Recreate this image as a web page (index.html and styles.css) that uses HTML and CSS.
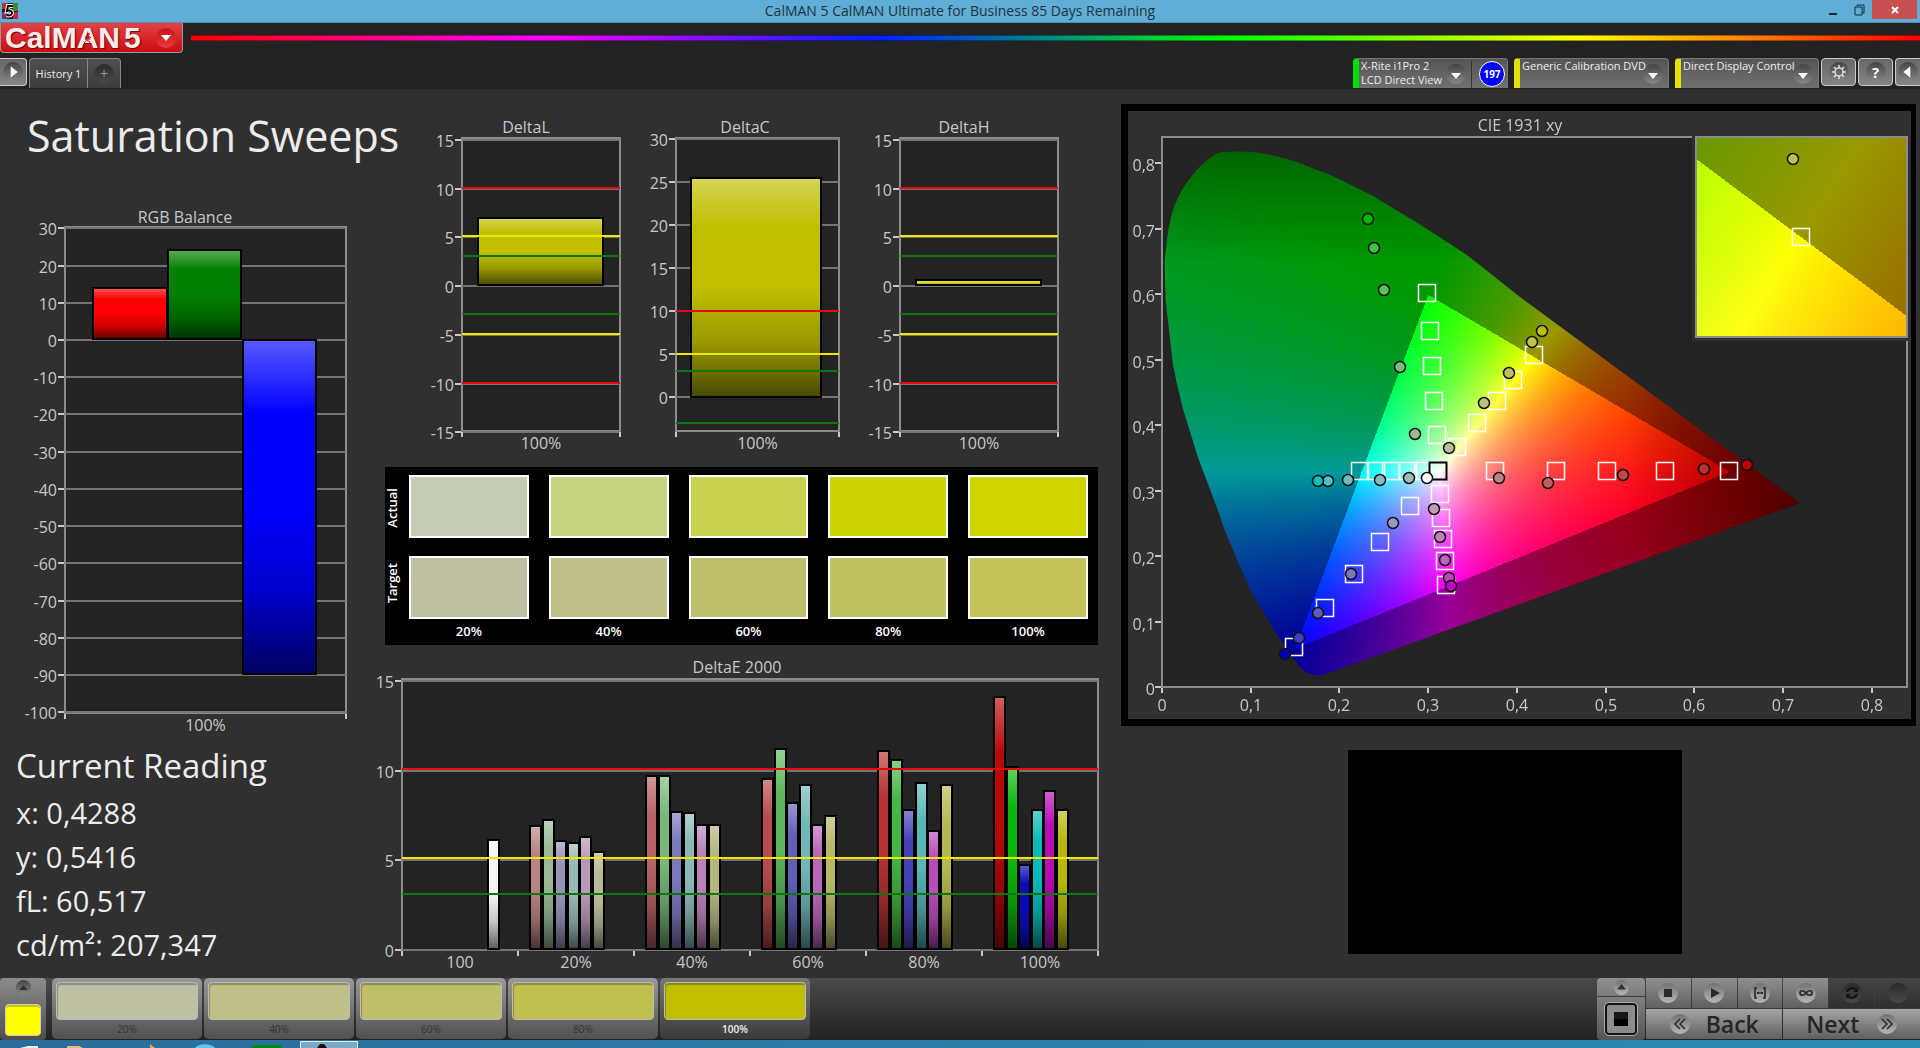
FILE: index.html
```html
<!DOCTYPE html>
<html lang="en">
<head>
<meta charset="utf-8">
<title>CalMAN 5 CalMAN Ultimate for Business 85 Days Remaining</title>
<link rel="stylesheet" href="styles.css">
</head>
<body>
<header class="titlebar">
  <svg class="app-icon" viewBox="0 0 16 16" aria-hidden="true"><rect width="16" height="16" fill="#2a1a14"/><rect width="6" height="6" fill="#b03428"/><rect y="9" width="5" height="7" fill="#8a2a6a"/><rect x="11" width="5" height="8" fill="#3c8a34"/><rect x="11" y="9" width="5" height="7" fill="#c02848"/><path d="M11 3H6L5 8c3-1 5 0 5 2s-2 3-5 2" fill="none" stroke="#fff" stroke-width="4"/><path d="M11 3H6L5 8c3-1 5 0 5 2s-2 3-5 2" fill="none" stroke="#000" stroke-width="2"/></svg>
  <h1 class="window-title">CalMAN 5 CalMAN Ultimate for Business 85 Days Remaining</h1>
  <div class="window-buttons">
    <button class="win" aria-label="Minimize"><svg viewBox="0 0 12 12"><path d="M2 9h8v2H2z" fill="#1c2a33"/></svg></button>
    <button class="win" aria-label="Restore"><svg viewBox="0 0 12 12"><path d="M4 2V1h7v8h-2M2 3h7v8H2z" fill="none" stroke="#1c2a33"/></svg></button>
    <button class="win win-close" aria-label="Close"><svg viewBox="0 0 12 12"><path d="M3 3l6 6M9 3l-6 6" stroke="#fff" stroke-width="2"/></svg></button>
  </div>
</header>

<div class="brandbar">
  <button class="brand"><span>CalM</span><span class="brand-a">A<svg viewBox="0 0 12 14"><circle cx="7" cy="2" r="1" fill="#c8191c"/><path d="M3 5l4-1 2 2M7 4L5 8l3 2-1 3M5 8l-3 3" fill="none" stroke="#c8191c"/></svg></span><span>N</span><span class="brand-five">5</span><i class="orb orb-red"><svg viewBox="0 0 10 6"><path d="M0 0h10L5 6z" fill="#fff"/></svg></i></button>
  <div class="spectrum"></div>
</div>

<nav class="toolbar">
  <button class="square side-open" aria-label="Open panel"><i class="orb"><svg viewBox="0 0 12 12"><path d="M4 1l6 5-6 5z" fill="#fff"/></svg></i></button>
  <div class="tabs"><button class="tab">History 1</button><button class="tab tab-add" aria-label="Add tab"><i class="orb orb-dark">+</i></button></div>
  <div class="devices">
    <button class="device device-green"><span class="device-name">X-Rite i1Pro 2<br>LCD Direct View</span><i class="orb"><svg viewBox="0 0 10 6"><path d="M0 0h10L5 6z" fill="#fff"/></svg></i><span class="badge-cell"><b class="badge">197</b></span></button>
    <button class="device"><span class="device-name">Generic Calibration DVD</span><i class="orb"><svg viewBox="0 0 10 6"><path d="M0 0h10L5 6z" fill="#fff"/></svg></i></button>
    <button class="device device-last"><span class="device-name">Direct Display Control</span><i class="orb"><svg viewBox="0 0 10 6"><path d="M0 0h10L5 6z" fill="#fff"/></svg></i></button>
  </div>
  <button class="square" aria-label="Settings"><i class="orb"><svg viewBox="0 0 14 14"><circle cx="7" cy="7" r="4" fill="none" stroke="#ddd" stroke-width="1.5"/><path d="M7 0v3M7 11v3M0 7h3M11 7h3M2 2l2 2M10 10l2 2M12 2l-2 2M4 10l-2 2" stroke="#ddd" stroke-width="1.6"/></svg></i></button>
  <button class="square" aria-label="Help"><i class="orb orb-help">?</i></button>
  <button class="square side-close" aria-label="Collapse panel"><i class="orb"><svg viewBox="0 0 12 12"><path d="M8 1L2 6l6 5z" fill="#fff"/></svg></i></button>
</nav>

<main class="workspace">
  <section class="col-left">
    <h2 class="page-title">Saturation Sweeps</h2>
    <svg class="chart" id="rgb" viewBox="0 205 385 535" role="img" aria-label="RGB Balance"></svg>
    <h3 class="reading-title">Current Reading</h3>
    <ul class="readings"><li>x: 0,4288</li><li>y: 0,5416</li><li>fL: 60,517</li><li>cd/m²: 207,347</li></ul>
  </section>

  <section class="col-mid">
    <div class="deltas">
      <svg class="chart" id="deltaL" viewBox="385 112 245 343" role="img" aria-label="DeltaL"></svg>
      <svg class="chart" id="deltaC" viewBox="630 112 225 343" role="img" aria-label="DeltaC"></svg>
      <svg class="chart" id="deltaH" viewBox="855 112 265 343" role="img" aria-label="DeltaH"></svg>
    </div>
    <table class="swatches">
      <tr><th scope="row"><span>Actual</span></th><td><i class="sw a20"></i></td><td><i class="sw a40"></i></td><td><i class="sw a60"></i></td><td><i class="sw a80"></i></td><td><i class="sw a100"></i></td></tr>
      <tr class="targets"><th scope="row"><span>Target</span></th><td><i class="sw t20"></i></td><td><i class="sw t40"></i></td><td><i class="sw t60"></i></td><td><i class="sw t80"></i></td><td><i class="sw t100"></i></td></tr>
      <tr class="levels"><td></td><td>20%</td><td>40%</td><td>60%</td><td>80%</td><td>100%</td></tr>
    </table>
    <svg class="chart chart-wide" id="deltaE" viewBox="385 655 735 323" role="img" aria-label="DeltaE 2000"></svg>
  </section>

  <section class="col-right">
    <div class="cie">
      <canvas id="gamut" width="795" height="622"></canvas>
      <svg class="chart" id="cie" viewBox="1121 104 795 622" role="img" aria-label="CIE 1931 xy"></svg>
    </div>
    <div class="preview"></div>
  </section>
</main>

<footer class="dock">
  <button class="current" aria-label="Current colour"><i class="orb orb-small"><svg viewBox="0 0 10 6"><path d="M0 6h10L5 0z" fill="#333"/></svg></i><i class="current-color"></i></button>
  <div class="levels-list">
    <button class="level"><i class="t20"></i>20%</button>
    <button class="level"><i class="t40"></i>40%</button>
    <button class="level"><i class="t60"></i>60%</button>
    <button class="level"><i class="l80"></i>80%</button>
    <button class="level level-on"><i class="l100"></i>100%</button>
  </div>
  <div class="pattern">
    <button class="pattern-up" aria-label="Show patterns"><i class="orb orb-light orb-small"><svg viewBox="0 0 10 6"><path d="M0 6h10L5 0z" fill="#333"/></svg></i></button>
    <button class="pattern-window" aria-label="Pattern window"><i></i></button>
  </div>
  <div class="transport">
    <button aria-label="Stop"><i class="orb orb-light"><svg viewBox="0 0 14 14"><path d="M3 3h8v8H3z" fill="#2a2a2a"/></svg></i></button>
    <button aria-label="Play"><i class="orb orb-light"><svg viewBox="0 0 14 14"><path d="M4 2l9 5-9 5z" fill="#2a2a2a"/></svg></i></button>
    <button aria-label="Read range"><i class="orb orb-light"><svg viewBox="0 0 14 14"><path d="M4 2H2v10h2M10 2h2v10h-2" fill="none" stroke="#2a2a2a" stroke-width="1.6"/><path d="M4 6h2v2H4zM6.500 6h1v2h-1zM8 6h2v2H8z" fill="#2a2a2a"/></svg></i></button>
    <button aria-label="Continuous"><i class="orb orb-light"><svg viewBox="0 0 14 14"><path d="M7 7C5 4 1 4 1 7s4 3 6 0 6-3 6 0-4 3-6 0z" fill="none" stroke="#2a2a2a" stroke-width="1.7"/></svg></i></button>
    <button class="off" aria-label="Refresh"><i class="orb orb-dark"><svg viewBox="0 0 14 14"><path d="M2 6c1-4 7-5 9-2M12 8c-1 4-7 5-9 2" fill="none" stroke="#151515" stroke-width="2.200"/><path d="M13 1v5H8zM1 13V8h5z" fill="#151515"/></svg></i></button>
    <button class="off" aria-label="Record"><i class="orb orb-dark"></i></button>
    <button class="step"><i class="orb orb-light"><svg viewBox="0 0 14 14"><path d="M7 2L2 7l5 5M12 2L7 7l5 5" fill="none" stroke="#2a2a2a" stroke-width="1.500"/></svg></i><span>Back</span></button>
    <button class="step step-next"><span>Next</span><i class="orb orb-light"><svg viewBox="0 0 14 14"><path d="M2 2l5 5-5 5M7 2l5 5-5 5" fill="none" stroke="#2a2a2a" stroke-width="1.500"/></svg></i></button>
  </div>
</footer>

<div class="taskbar">
  <svg viewBox="0 0 400 8" aria-hidden="true"><path d="M20 8l8-2h10v2z" fill="#e8f0f4"/><path d="M67 8V6h12l4 2z" fill="#e8c070"/><path d="M150 8V4l5 4z" fill="#f0a050"/><path d="M195 8c4-5 16-5 20 0z" fill="#60c8f0"/><path d="M252 5h30v3h-30z" fill="#008c10"/><path d="M300.500 8V1.500h57V8" fill="#7aa8c8" stroke="#e4eef4"/><path d="M317 8l3-4h4l3 4z" fill="#2a0a10"/></svg>
</div>
<script src="charts.js"></script>
</body>
</html>
```

FILE: styles.css
```css
* { box-sizing: border-box; }

body {
  margin: 0;
  min-height: 100vh;
  display: flex;
  flex-direction: column;
  background: #222;
  color: #ececec;
  font-family: "Open Sans", "Noto Sans", sans-serif;
  overflow-x: hidden;
}

button {
  margin: 0;
  padding: 0;
  border: 0;
  color: inherit;
  font: inherit;
}

svg { display: block; }

/* Window frame */
.titlebar {
  display: grid;
  grid-template-columns: 1fr auto 1fr;
  align-items: center;
  height: 23px;
  background: #60add5;
  border-bottom: 1px solid #4b8fb3;
}

.app-icon { width: 16px; height: 16px; margin-left: 2px; }

.window-title {
  margin: 0;
  font-size: 14px;
  line-height: 22px;
  font-weight: 400;
  color: #1d3440;
}

.window-buttons {
  display: flex;
  justify-content: flex-end;
  align-self: start;
  padding-right: 3px;
}

.win {
  display: grid;
  place-items: center;
  width: 26px;
  height: 19px;
  background: none;
}

.win svg { width: 12px; height: 12px; }
.win-close { width: 45px; background: #c75050; }

.brandbar {
  display: flex;
  align-items: flex-start;
  gap: 8px;
  height: 35px;
}

.brand {
  display: flex;
  align-items: center;
  width: 183px;
  height: 30px;
  padding-left: 4px;
  border: 1px solid #999;
  border-top: 0;
  border-radius: 0 0 4px 4px;
  background: linear-gradient(#e04347, #cc0c10);
  color: #eee;
  font: 700 30px/28px "Liberation Sans", sans-serif;
  text-shadow: 1px 1px 1px #700;
}

.brand-a { position: relative; }
.brand-a svg { position: absolute; left: 5px; top: 8px; width: 12px; height: 14px; }
.brand-five { margin-left: 4px; }
.brand .orb { margin-left: auto; margin-right: 6px; }

.spectrum {
  flex: 1;
  height: 6px;
  margin-top: 12px;
  border-top: 1px solid #0006;
  border-bottom: 1px solid #0006;
  background: linear-gradient(90deg, red, magenta 20%, #0020ff 40%, lime 60%, yellow 80%, red);
}

.orb {
  display: grid;
  place-items: center;
  flex: none;
  width: 20px;
  height: 20px;
  border-radius: 50%;
  background: linear-gradient(#444, #888);
  font-style: normal;
}

.orb svg { width: 10px; }
.orb-red { background: linear-gradient(#c81018, #e83c40); }
.orb-dark { background: linear-gradient(#2a2a2a, #4a4a4a); color: #999; }
.orb-light { background: linear-gradient(#707070, #b8b8b8); }
.orb-light svg, .orb-dark svg { width: 14px; }
.orb-small { width: 15px; height: 15px; }
.orb-small svg { width: 9px; }
.orb-help { color: #fff; font-size: 15px; font-weight: 700; }

/* Tabs and devices */
.toolbar {
  display: flex;
  gap: 2px;
  height: 31px;
}

.square {
  display: grid;
  place-items: center;
  width: 35px;
  height: 28px;
  border: 1px solid #ccc;
  border-radius: 4px;
  background: linear-gradient(#666, #858585);
}

.square .orb svg { width: 14px; }
.side-open { width: 27px; border-left: 0; border-radius: 0 4px 4px 0; }
.side-close { width: 25px; border-right: 0; border-radius: 4px 0 0 4px; }

.tabs {
  display: flex;
  width: 92px;
  height: 30px;
  border: 1px solid #888;
  border-bottom: 0;
  border-radius: 4px 4px 0 0;
  background: linear-gradient(#505050, #3c3c3c);
}

.tab { flex: 1; background: none; font-size: 11px; }
.tab-add { display: grid; place-items: center; flex: 0 0 33px; border-left: 1px solid #888; font-size: 14px; }

.devices { display: flex; gap: 6px; margin-left: auto; }

.device {
  display: flex;
  align-items: center;
  width: 155px;
  height: 30px;
  border: 1px solid #777;
  border-bottom: 0;
  border-left: 6px solid #e6e000;
  border-radius: 4px 4px 0 0;
  background: linear-gradient(#555, #707070);
  font-size: 11px;
  line-height: 14px;
  text-align: left;
}

.device-green { border-left-color: #00e000; }
.device-last { width: 144px; }
.device-name { flex: 1; align-self: flex-start; padding-left: 2px; white-space: nowrap; }
.device > .orb { margin-right: 5px; margin-left: -8px; }
.device > .orb svg { margin-top: 4px; }

.badge-cell {
  padding: 1px 2px 1px 7px;
  border-left: 1px solid #333;
}

.badge {
  display: grid;
  place-items: center;
  width: 26px;
  height: 26px;
  border: 1px solid #fff;
  border-radius: 50%;
  background: #00f;
  color: #fff;
  font-size: 10px;
}

/* Workspace */
.workspace {
  flex: 1;
  display: grid;
  grid-template-columns: minmax(0, 385fr) minmax(0, 735fr) minmax(0, 800fr);
  background: #303030;
}

.col-left, .col-mid { padding-top: 23px; }
.chart { width: 100%; height: auto; overflow: visible; }

.page-title {
  margin: 0;
  height: 93px;
  padding-left: 27px;
  font-size: 43px;
  line-height: 48px;
  font-weight: 400;
  white-space: nowrap;
}

.reading-title {
  margin: 0;
  padding: 4px 0 0 16px;
  font-size: 33px;
  line-height: 44px;
  font-weight: 400;
}

.readings {
  margin: 0;
  padding: 3px 0 0 16px;
  list-style: none;
  font-size: 29px;
  line-height: 44px;
}

.deltas {
  display: grid;
  grid-template-columns: 245fr 225fr 265fr;
}

.swatches {
  width: 97%;
  height: 178px;
  margin: 12px 0 10px;
  border-collapse: collapse;
  table-layout: fixed;
  background: #000;
  color: #fff;
  font-size: 13px;
}

.swatches th { width: 14px; padding: 0; font-weight: 600; font-size: 13px; }
.swatches th span { display: block; line-height: 14px; margin: 0 auto; writing-mode: vertical-rl; transform: rotate(180deg); }
.swatches td { padding: 8px 10px 10px; text-align: center; }
.swatches .targets td { padding-bottom: 0; }
.swatches .levels td { padding: 0 0 2px; line-height: 24px; font-weight: 600; }
.sw { display: block; height: 63px; border: 2px solid #fff; }

.a20 { background: #c5ceb4; }
.a40 { background: #c7d27e; }
.a60 { background: #c9d24e; }
.a80 { background: #cad500; }
.a100 { background: #d0d700; }
.t20 { background: #bfbfa4; }
.t40 { background: #c0bf87; }
.t60 { background: #bfbe6a; }
.t80 { background: #c0c160; }
.t100 { background: #c2c358; }
.l80 { background: #bfbf4d; }
.l100 { background: #bfbf00; }

.col-right { padding: 15px 4px 0 1px; }

.cie { display: grid; }
.cie > * { grid-area: 1 / 1; width: 100%; height: auto; }

.preview {
  width: 42%;
  height: 204px;
  margin: 24px 0 0 227px;
  background: #000;
}

/* Bottom dock */
.dock {
  display: flex;
  height: 62px;
  background: linear-gradient(#4a4a4a, #222);
}

.current {
  display: flex;
  flex-direction: column;
  align-items: center;
  justify-content: space-between;
  width: 46px;
  padding: 2px 0 4px;
  border-radius: 4px;
  background: linear-gradient(#8c8c8c, #4c4c4c);
}

.current-color {
  width: 36px;
  height: 32px;
  border: 1px solid #ccc;
  border-radius: 4px;
  background: #ff0;
  box-shadow: inset 0 2px 0 #c8c800;
}

.levels-list { display: flex; gap: 2px; margin-left: 6px; }

.level {
  width: 150px;
  height: 61px;
  padding: 4px;
  border-radius: 5px;
  background: linear-gradient(#999, #505050);
  color: #333;
  font-size: 10px;
  line-height: 18px;
}

.level i {
  display: block;
  height: 38px;
  border: 1px solid #bbb;
  border-radius: 4px;
  box-shadow: inset 1px 2px 1px #0004;
}

.level-on { background: linear-gradient(#777, #3a3a3a); color: #eee; font-weight: 600; }

.pattern { display: grid; grid-template-rows: 18px 43px; gap: 1px; width: 48px; margin-left: auto; }
.pattern button { display: grid; place-items: center; background: linear-gradient(#909090, #7c7c7c); border-radius: 4px 4px 0 0; }
.pattern .pattern-window { background: linear-gradient(#808080, #555); border-radius: 0 0 4px 4px; }

.pattern-window i {
  width: 32px;
  height: 32px;
  border: 2px solid #151515;
  outline: 1px solid #aaa;
  border-radius: 4px;
  background: linear-gradient(#181818 50%, #000 50%) center / 14px 14px no-repeat, #8c8c8c;
}

.transport {
  display: grid;
  grid-template-columns: repeat(6, 1fr);
  grid-template-rows: 30px 30px;
  gap: 1px;
  width: 274px;
  margin-left: 1px;
}

.transport button { display: grid; place-items: center; background: linear-gradient(#909090, #606060); }
.transport .off { background: linear-gradient(#454545, #303030); }

.transport .step {
  grid-column: span 3;
  display: flex;
  align-items: center;
  justify-content: center;
  gap: 16px;
  background: linear-gradient(#a4a4a4, #606060);
  color: #262626;
  font-size: 23px;
  line-height: 30px;
  font-weight: 600;
}

.transport .step-next { gap: 18px; }

.taskbar { height: 8px; background: linear-gradient(90deg, #2a6c9c, #2e8cb4); }
.taskbar svg { width: 400px; height: 8px; }

/* Chart text and lines */
.chart text { fill: #c8c8c8; font-size: 16px; }
.plot { fill: #232323; stroke: #8c8c8c; stroke-width: 2; }
.grid { stroke: #747474; stroke-width: 2; }
.tick { stroke: #c8c8c8; stroke-width: 2; }
.bar { stroke: #000; stroke-width: 2; }
.limit-red { stroke: #e80808; stroke-width: 2; }
.limit-yellow { stroke: #f0e800; stroke-width: 2; }
.limit-green { stroke: #0c780c; stroke-width: 2; }
.target { fill: none; stroke: #fff; stroke-width: 1.5; }
.white-target { stroke: #000; stroke-width: 2; }
.reading { stroke: #111; stroke-width: 1.5; }
```

FILE: charts.js
```js
const NS = 'http://www.w3.org/2000/svg';

function add(parent, name, attrs, text) {
  const el = document.createElementNS(NS, name);
  for (const key in attrs) el.setAttribute(key, attrs[key]);
  if (text !== undefined) el.textContent = text;
  parent.appendChild(el);
  return el;
}

function line(svg, cls, x1, y1, x2, y2) {
  add(svg, 'line', { class: cls, x1, y1, x2, y2 });
}

function label(svg, x, y, text, anchor) {
  add(svg, 'text', { x, y: y + 6, 'text-anchor': anchor }, text);
}

// Fill that is lit at the top and shaded at the bottom of each bar.
function shade(svg) {
  const g = add(add(svg, 'defs', {}), 'linearGradient', { id: svg.id + '-shade', x1: 0, y1: 0, x2: 0, y2: 1 });
  [[0, '#fff', 0.35], [0.22, '#fff', 0], [0.5, '#000', 0], [0.75, '#000', 0.2], [1, '#000', 0.62]].forEach(
    ([offset, color, opacity]) => add(g, 'stop', { offset, 'stop-color': color, 'stop-opacity': opacity }));
}

function barChart(id, o) {
  const svg = document.getElementById(id);
  const [l, t, r, b] = o.plot;
  const y = v => Math.round(o.zero - v * o.unit);
  shade(svg);
  label(svg, o.titleX, o.titleY, o.title, 'middle');
  add(svg, 'rect', { class: 'plot', x: l, y: t, width: r - l, height: b - t });
  for (let v = o.from; v <= o.to; v += o.step) {
    line(svg, 'grid', l, y(v), r, y(v));
    line(svg, 'tick', l - 7, y(v), l - 1, y(v));
    label(svg, l - 8, y(v) + 1, String(v), 'end');
  }
  o.bars.forEach(([x, top, w, bottom, fill]) => {
    const box = { class: 'bar', x, y: top, width: w, height: bottom - top };
    add(svg, 'rect', { ...box, fill });
    add(svg, 'rect', { ...box, fill: `url(#${id}-shade)` });
  });
  (o.limits || []).forEach(([v, color]) => line(svg, 'limit-' + color, l, y(v) - o.lift, r, y(v) - o.lift));
  const n = o.groups.length;
  for (let i = 0; i <= n; i++) {
    const x = l + (r - l) * i / n;
    line(svg, 'tick', x, b + 1, x, b + 6);
    if (i < n) label(svg, x + (r - l) / n / 2, b + 12, o.groups[i], 'middle');
  }
}

barChart('rgb', {
  title: 'RGB Balance', titleX: 185, titleY: 217, plot: [65, 227, 346, 713],
  zero: 340, unit: 3.724, from: -100, to: 30, step: 10, groups: ['100%'],
  bars: [[93, 288, 74, 339, '#f00'], [168, 250, 73, 339, '#008000'], [243, 340, 73, 674, '#00f']]
});

const limits = [[10, 'red'], [5, 'yellow'], [3, 'green'], [-3, 'green'], [-5, 'yellow'], [-10, 'red']];
barChart('deltaL', {
  title: 'DeltaL', titleX: 526, titleY: 127, plot: [462, 138, 620, 431],
  zero: 286, unit: 9.75, from: -15, to: 15, step: 5, groups: ['100%'], limits, lift: 1,
  bars: [[478, 218, 125, 285, '#bfbf00']]
});
barChart('deltaC', {
  title: 'DeltaC', titleX: 745, titleY: 127, plot: [676, 138, 839, 431],
  zero: 397, unit: 8.6, from: 0, to: 30, step: 5, groups: ['100%'], lift: 0,
  limits: limits.slice(0, 4),
  bars: [[691, 178, 130, 397, '#bfbf00']]
});
barChart('deltaH', {
  title: 'DeltaH', titleX: 964, titleY: 127, plot: [900, 138, 1058, 431],
  zero: 286, unit: 9.75, from: -15, to: 15, step: 5, groups: ['100%'], limits, lift: 1,
  bars: [[916, 280, 125, 285, '#dede30']]
});

const sweeps = [
  [529, [826, 820, 841, 843, 837, 852], ['#b98484', '#98b898', '#9494b8', '#98b8b8', '#b898b8', '#b8b898']],
  [645, [776, 776, 812, 813, 825, 825], ['#b86466', '#78b87a', '#7a7aba', '#8abab8', '#b882b8', '#b8b67e']],
  [761, [779, 749, 803, 785, 825, 816], ['#b84c4c', '#5cb85c', '#6060b8', '#70b8b8', '#b868b8', '#b8b868']],
  [877, [751, 760, 810, 783, 831, 785], ['#b83434', '#44b844', '#4444b8', '#58b8b8', '#b84cb8', '#b8b850']],
  [993, [697, 767, 865, 810, 791, 810], ['#b80a0a', '#0cb80c', '#0a0ab8', '#0cb8b8', '#b80cb8', '#b8b80c']]
];
const sweepBars = [[488, 840, 11, 949, '#f4f4f4']];
sweeps.forEach(([x, tops, colors]) => tops.forEach((top, i) =>
  sweepBars.push([Math.round(x + 1 + i * 12.5), top, 11, 949, colors[i]])));
barChart('deltaE', {
  title: 'DeltaE 2000', titleX: 737, titleY: 667, plot: [402, 679, 1098, 950],
  zero: 950, unit: 17.93, from: 0, to: 15, step: 5, lift: 2,
  groups: ['100', '20%', '40%', '60%', '80%', '100%'],
  limits: limits.slice(0, 3), bars: sweepBars
});

// ---- CIE 1931 diagram ----
const LOCUS = 'M1323 675Q1314 676 1307 673Q1300 668 1290 654L1278 636L1267 618L1253 595Q1242 572 1233 550' +
  'Q1224 530 1217 508L1198 457.600L1183 409Q1177 386 1173 365L1168 321Q1165 300 1165 277Q1164 260 1166 249' +
  'Q1167 235 1169.500 224.500Q1172 210 1177 200Q1183 186 1192 176Q1200 165 1210 158Q1216 153 1223 152' +
  'Q1240 151 1253 152Q1270 154 1283 158Q1296 161 1307 166L1333 176L1373 196L1420 224.500L1467 255L1520 297L1800 503Z';

function chroma(x, y, inside) {
  if (y < 0.005) y = 0.005;
  const X = x / y, Z = (1 - x - y) / y;
  let c = [3.2406 * X - 1.5372 - 0.4986 * Z, -0.9689 * X + 1.8758 + 0.0415 * Z, 0.0557 * X - 0.204 + 1.057 * Z];
  const top = Math.max(...c);
  let k = inside ? 255 : 153;
  if (x > 0.52) k *= 1 - (x - 0.52) * 2.4;
  if (y > 0.65) k *= 1 - (y - 0.65) * 2;
  return c.map(v => Math.max(0, v / top) * k);
}

const side = (p, a, b) => (b[0] - a[0]) * (p[1] - a[1]) - (b[1] - a[1]) * (p[0] - a[0]);
const R = [0.64, 0.33], G = [0.3, 0.6], B = [0.15, 0.06];
const inGamut = p => side(p, R, G) >= 0 && side(p, G, B) >= 0 && side(p, B, R) >= 0;

function paint(w, h, toXY) {
  const c = document.createElement('canvas');
  c.width = w;
  c.height = h;
  const g = c.getContext('2d'), img = g.createImageData(w, h);
  for (let j = 0; j < h; j++) for (let i = 0; i < w; i++) {
    const p = toXY(i, j), rgb = chroma(p[0], p[1], inGamut(p)), k = (j * w + i) * 4;
    img.data[k] = rgb[0];
    img.data[k + 1] = rgb[1];
    img.data[k + 2] = rgb[2];
    img.data[k + 3] = 255;
  }
  g.putImageData(img, 0, 0);
  return c;
}

const ctx = document.getElementById('gamut').getContext('2d');
ctx.translate(-1121, -104);
ctx.fillStyle = '#000';
ctx.fillRect(1121, 104, 795, 622);
ctx.fillStyle = '#303030';
ctx.fillRect(1128, 111, 783, 608);
ctx.fillStyle = '#232323';
ctx.fillRect(1162, 137, 745, 550);
ctx.save();
ctx.clip(new Path2D(LOCUS));
ctx.drawImage(paint(795, 622, (i, j) => [(i + 1121 - 1161.7) / 887, (687.4 - j - 104) / 655]), 1121, 104);
ctx.restore();

const cie = document.getElementById('cie');
label(cie, 1520, 125, 'CIE 1931 xy', 'middle');
add(cie, 'rect', { class: 'plot', x: 1162, y: 137, width: 745, height: 550, style: 'fill:none' });
for (let i = 0; i <= 8; i++) {
  const name = i ? '0,' + i : '0';
  const x = Math.round(1162 + i * 88.7), y = Math.round(687 - i * 65.5);
  line(cie, 'tick', x, 688, x, 693);
  label(cie, x, 705, name, 'middle');
  line(cie, 'tick', 1155, y, 1161, y);
  label(cie, 1155, y + 2, name, 'end');
}

const targets = [
  [1427, 293], [1430, 331], [1432, 366], [1434, 401], [1437, 435],
  [1457, 447], [1477, 423], [1497, 401], [1513, 380], [1534, 355],
  [1360, 471], [1376, 471], [1391, 471], [1408, 471], [1423, 471],
  [1495, 471], [1556, 471], [1607, 471], [1665, 471], [1729, 471],
  [1410, 506], [1380, 542], [1354, 574], [1325, 608], [1294, 647],
  [1440, 494], [1441, 518], [1443, 539], [1445, 561], [1446, 585]
];
const square = (x, y, cls) => add(cie, 'rect', { class: cls, x: x - 8.5, y: y - 8.5, width: 17, height: 17 });
targets.forEach(([x, y]) => square(x, y, 'target'));
square(1438, 471, 'target white-target');

const readings = [
  [1368, 219, '#00b800'], [1374, 248, '#44c044'], [1384, 290, '#60c060'], [1400, 367, '#7cbc7c'], [1415, 434, '#98bc98'],
  [1449, 448, '#bcbc98'], [1484, 403, '#c0be80'], [1509, 373, '#c0be60'], [1532, 342, '#c0c04c'], [1542, 331, '#bfbf00'],
  [1328, 481, '#50c0c0'], [1318, 481, '#00c0c0'], [1348, 480, '#70bcbc'], [1380, 480, '#88bcbc'], [1409, 478, '#9cbcbc'],
  [1427, 478, '#ffffff'],
  [1499, 478, '#bc8484'], [1548, 483, '#c06060'], [1623, 475, '#c04848'], [1704, 469, '#c03030'], [1747, 465, '#c00000'],
  [1393, 523, '#9898c0'], [1351, 574, '#7878c0'], [1318, 613, '#5c5cc0'], [1299, 638, '#4040c0'], [1285, 654, '#0000c0'],
  [1434, 509, '#c098c0'], [1440, 537, '#c080c0'], [1445, 560, '#c064c0'], [1449, 578, '#c044c0'], [1451, 586, '#c000c0'],
];
const dot = (x, y, fill) => add(cie, 'circle', { class: 'reading', cx: x, cy: y, r: 5.5, fill });
readings.forEach(r => dot(...r));

// Magnified view around the selected target
ctx.fillStyle = '#303030';
ctx.fillRect(1692, 130, 218, 211);
ctx.drawImage(paint(212, 201, (i, j) =>
  [0.4195 + (i + 1696 - 1801) / 4258, 0.5051 - (j + 137 - 237) / 3996]), 1696, 137);
add(cie, 'rect', { x: 1692, y: 134, width: 3, height: 207, fill: '#303030' });
add(cie, 'rect', { x: 1692, y: 338, width: 218, height: 3, fill: '#303030' });
add(cie, 'rect', { class: 'plot', x: 1696, y: 137, width: 211, height: 200, style: 'fill:none' });
square(1801, 237, 'target');
dot(1793, 159, '#c0c04c');
```
